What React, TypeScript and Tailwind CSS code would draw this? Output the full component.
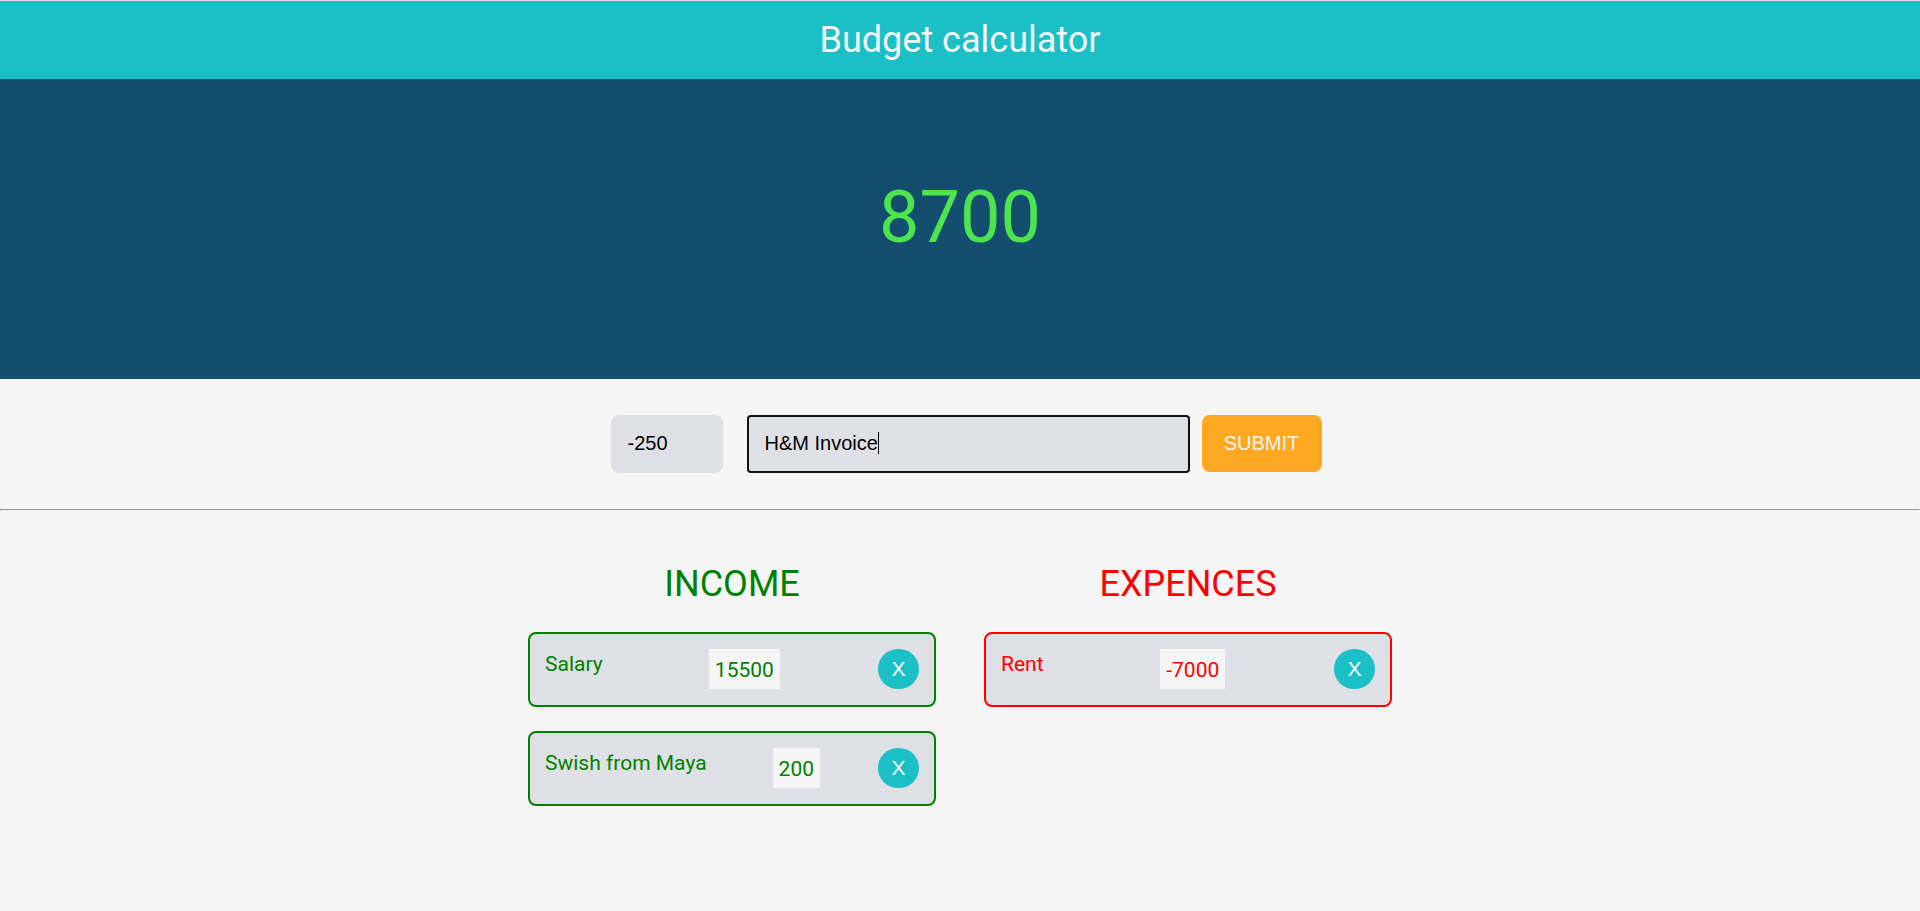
import { useState } from "react";
import type { FormEvent } from "react";

type Entry = { id: number; label: string; amount: number };

const initialEntries: Entry[] = [
  { id: 1, label: "Salary", amount: 15500 },
  { id: 2, label: "Swish from Maya", amount: 200 },
  { id: 3, label: "Rent", amount: -7000 },
];

type ListProps = {
  title: string;
  tone: string;
  entries: Entry[];
  onRemove: (id: number) => void;
};

function EntryList({ title, tone, entries, onRemove }: ListProps) {
  return (
    <section className={`min-w-0 flex-1 ${tone}`}>
      <h2 className="mb-[27px] text-center text-4xl leading-[42px]">{title}</h2>
      <ul className="flex flex-col gap-6">
        {entries.map((entry) => (
          <li
            key={entry.id}
            className="flex items-start justify-between rounded-lg border-2 border-current bg-[#dee0e6] px-[15px] pt-[15px] pb-4 text-[21px] leading-7"
          >
            <span className="mr-2 pt-px">{entry.label}</span>
            <span className="bg-[#f5f5f5] px-1.5 pt-[7px] pb-[5px]">{entry.amount}</span>
            <button
              type="button"
              aria-label={`Remove ${entry.label}`}
              onClick={() => onRemove(entry.id)}
              className="h-10 w-[41px] rounded-full bg-[#1ac0c6] font-['Liberation_Sans',Arial,sans-serif] text-[21px] text-white"
            >
              X
            </button>
          </li>
        ))}
      </ul>
    </section>
  );
}

export default function App() {
  const [entries, setEntries] = useState<Entry[]>(initialEntries);
  const [amount, setAmount] = useState("-250");
  const [label, setLabel] = useState("H&M Invoice");

  const total = entries.reduce((sum, entry) => sum + entry.amount, 0);
  const remove = (id: number) => setEntries(entries.filter((entry) => entry.id !== id));
  const submit = (event: FormEvent) => {
    event.preventDefault();
    const value = Number(amount);
    if (!value || !label) return;
    setEntries([...entries, { id: Date.now(), label, amount: value }]);
    setAmount("");
    setLabel("");
  };

  return (
    <div className="min-h-screen border-t border-[#dadce0] bg-[#f5f5f5] font-[Roboto,sans-serif]">
      <header className="bg-[#1ac0c6] py-[18px] text-center text-[#f5f5f5]">
        <h1 className="text-4xl leading-[42px]">Budget calculator</h1>
      </header>
      <div className="flex h-[300px] items-center justify-center bg-[#134e6f] pb-[22px]">
        <output className="text-7xl text-[#4ee44e]">{total}</output>
      </div>
      <form
        onSubmit={submit}
        className="flex items-start justify-center py-9 font-['Liberation_Sans',Arial,sans-serif] text-xl"
      >
        <input
          aria-label="Amount"
          value={amount}
          onChange={(event) => setAmount(event.target.value)}
          className="mx-3 h-[58px] w-28 rounded-lg bg-[#dee0e6] px-[17px] pb-0.5 text-black outline-[#101010] focus:rounded-sm focus:outline-2 focus:-outline-offset-2"
        />
        <div className="relative mx-3 w-[443px]">
          <input
            aria-label="Description"
            autoFocus
            value={label}
            onChange={(event) => setLabel(event.target.value)}
            className="peer h-[58px] w-full rounded-lg bg-[#dee0e6] px-[18px] pb-0.5 text-black caret-transparent outline-[#101010] focus:rounded-sm focus:outline-2 focus:-outline-offset-2"
          />
          {/* Caret that follows the end of the typed text */}
          <div
            aria-hidden="true"
            className="pointer-events-none absolute inset-y-0 left-[18px] hidden items-center pb-0.5 peer-focus:flex"
          >
            <span className="invisible whitespace-pre">{label}</span>
            <span className="h-[22px] w-px bg-black" />
          </div>
        </div>
        <button
          type="submit"
          className="h-[57px] w-30 rounded-lg bg-[#ffa822] pb-0.5 text-[#f5f5f5]"
        >
          SUBMIT
        </button>
      </form>
      <hr className="border border-t-[#9a9a9a] border-r-[#eeeeee] border-b-[#eeeeee] border-l-[#9a9a9a]" />
      <main className="mx-auto flex max-w-[864px] items-start gap-12 pt-[52px] pb-12">
        <EntryList
          title="INCOME"
          tone="text-[#008000]"
          entries={entries.filter((entry) => entry.amount > 0)}
          onRemove={remove}
        />
        <EntryList
          title="EXPENCES"
          tone="text-[#ff0000]"
          entries={entries.filter((entry) => entry.amount < 0)}
          onRemove={remove}
        />
      </main>
    </div>
  );
}
